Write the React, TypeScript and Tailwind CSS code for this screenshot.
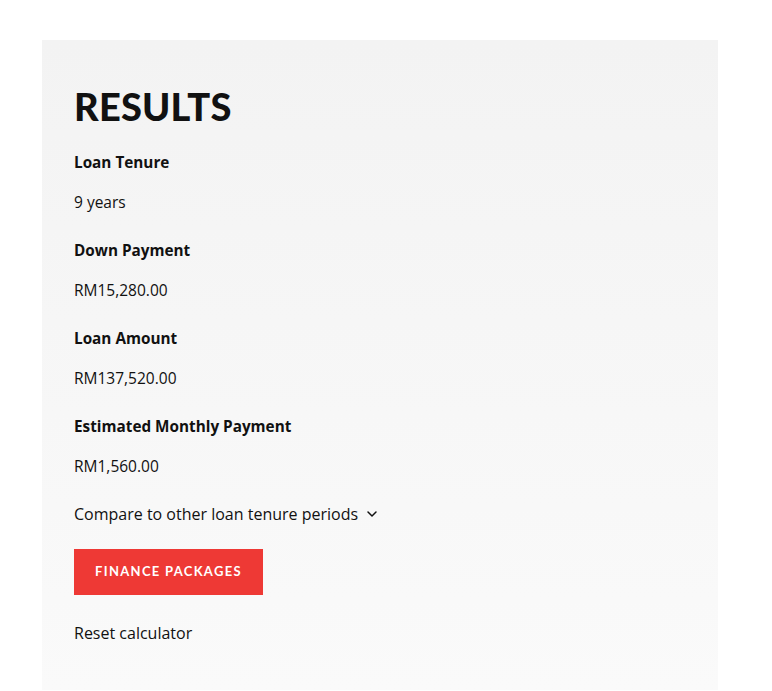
import { ChevronDown } from "lucide-react";

const RESULTS = [
  { label: "Loan Tenure", value: "9 years" },
  { label: "Down Payment", value: "RM15,280.00" },
  { label: "Loan Amount", value: "RM137,520.00" },
  { label: "Estimated Monthly Payment", value: "RM1,560.00" },
];

export default function App() {
  return (
    <div className="min-h-[691px] bg-white pt-10 pl-[42px] font-['Open_Sans',sans-serif] text-[#111]">
      <section className="h-[650px] w-[676px] bg-gradient-to-b from-[#f3f3f3] to-[#fafafa] px-8 pt-[42px]">
        <h1 className="font-['Lato',sans-serif] text-[38px] font-black leading-[48px] tracking-[0.2px]">RESULTS</h1>

        <dl className="mt-[21px]">
          {RESULTS.map((r) => (
            <div key={r.label} className="mb-[26px]">
              <dt className="text-[15.3px] font-bold leading-[22px]">{r.label}</dt>
              <dd className="mt-[18px] text-[15.5px] leading-[22px]">{r.value}</dd>
            </div>
          ))}
        </dl>

        <button type="button" className="-mt-[1px] flex items-center gap-1.5 text-[16px] leading-[24px]">
          Compare to other loan tenure periods
          <ChevronDown className="h-4 w-4" strokeWidth={2.25} />
        </button>

        <button
          type="button"
          className="mt-[23px] h-[46px] w-[189px] bg-[#ee3935] font-['Lato',sans-serif] text-[13px] font-bold tracking-[1.3px] text-white"
        >
          FINANCE PACKAGES
        </button>

        <div className="mt-[26px] text-[16px] leading-[24px]">Reset calculator</div>
      </section>
    </div>
  );
}
